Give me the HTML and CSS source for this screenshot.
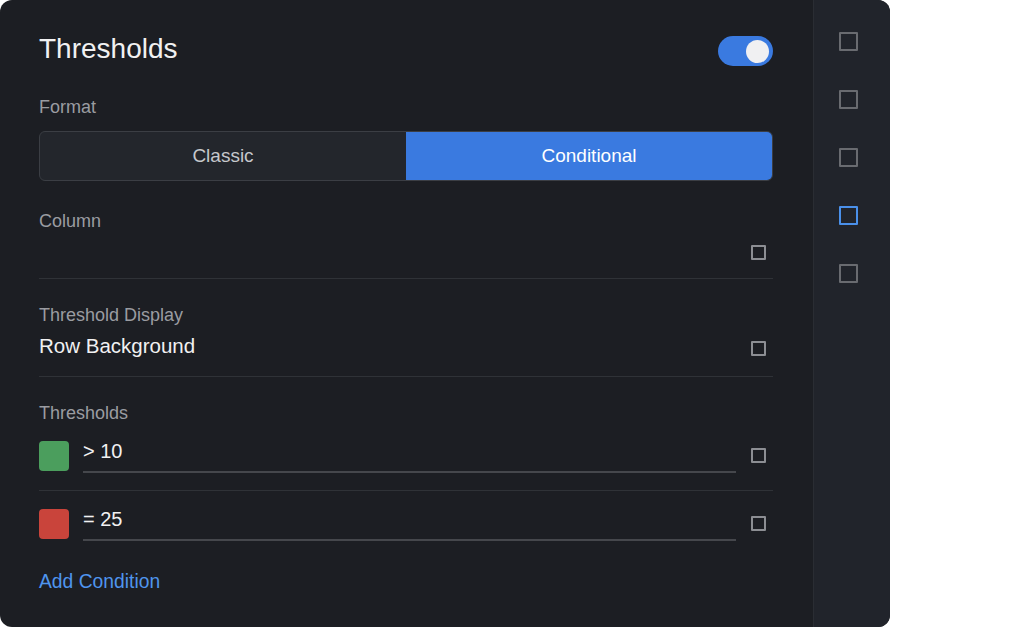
FILE: index.html
```html
<!DOCTYPE html>
<html lang="en">
<head>
  <meta charset="UTF-8">
  <meta name="viewport" content="width=device-width, initial-scale=1.0">
  <title>Thresholds</title>
  <link rel="stylesheet" href="styles.css">
</head>
<body>
  <div class="panel">
    <main class="editor">
      <header class="editor-header">
        <h1>Thresholds</h1>
        <span class="toggle is-on"><span class="toggle-knob"></span></span>
      </header>

      <section class="field field-format">
        <div class="field-label">Format</div>
        <div class="segmented">
          <button class="segment">Classic</button>
          <button class="segment is-active">Conditional</button>
        </div>
      </section>

      <section class="field field-first">
        <div class="field-label">Column</div>
        <div class="field-value field-value-empty">
          <span class="value-text"></span>
          <span class="check"></span>
        </div>
      </section>

      <section class="field">
        <div class="field-label">Threshold Display</div>
        <div class="field-value">
          <span class="value-text">Row Background</span>
          <span class="check"></span>
        </div>
      </section>

      <section class="field field-last">
        <div class="field-label">Thresholds</div>
        <ul class="threshold-list">
          <li class="threshold-row">
            <span class="swatch swatch-green"></span>
            <span class="threshold-input">&gt; 10</span>
            <span class="check"></span>
          </li>
          <li class="threshold-row">
            <span class="swatch swatch-red"></span>
            <span class="threshold-input">= 25</span>
            <span class="check"></span>
          </li>
        </ul>
        <a class="add-link" href="#">Add Condition</a>
      </section>
    </main>

    <aside class="rail">
      <span class="rail-icon"></span>
      <span class="rail-icon"></span>
      <span class="rail-icon"></span>
      <span class="rail-icon is-active"></span>
      <span class="rail-icon"></span>
    </aside>
  </div>
</body>
</html>
```

FILE: styles.css
```css
:root {
  --bg: #1c1e23;
  --rail-bg: #21242b;
  --line: #2f3237;
  --text: #f1f1f2;
  --muted: #9a9ca1;
  --primary: #3a7ae0;
  --link: #4f95ee;
}
* {
  box-sizing: border-box;
}
body {
  margin: 0;
  background: #fff;
  font-family: 'Liberation Sans', Arial, sans-serif;
}
.panel {
  display: flex;
  width: 890px;
  height: 627px;
  background: var(--bg);
  border-radius: 12px;
  overflow: hidden;
}
.editor {
  flex: 1;
  padding: 36px 40px 0 39px;
}
.editor-header {
  display: flex;
  align-items: flex-start;
  justify-content: space-between;
  height: 30px;
}
.editor-header h1 {
  margin: 0;
  font-size: 28px;
  font-weight: 400;
  line-height: 26px;
  color: var(--text);
}
.toggle {
  position: relative;
  width: 55px;
  height: 30px;
  border-radius: 15px;
  background: #4a4d53;
}
.toggle.is-on {
  background: var(--primary);
}
.toggle-knob {
  position: absolute;
  top: 4px;
  right: 4px;
  width: 23px;
  height: 23px;
  border-radius: 50%;
  background: #f0f0f2;
}
.field {
  padding: 26px 0 18px;
  border-bottom: 1px solid var(--line);
}
.field-format {
  padding: 0;
  margin-top: 31px;
  border: none;
}
.field-first {
  padding-top: 30px;
  padding-bottom: 17px;
}
.field-last {
  border: none;
}
.field-label {
  font-size: 18px;
  line-height: 20px;
  color: var(--muted);
}
.segmented {
  display: flex;
  height: 50px;
  margin-top: 14px;
  border: 1px solid #3b3e44;
  border-radius: 6px;
  overflow: hidden;
  background: #23262c;
}
.segment {
  flex: 1;
  border: none;
  background: transparent;
  font-family: inherit;
  font-size: 19px;
  color: #c6c8cc;
}
.segment.is-active {
  background: var(--primary);
  color: #fff;
}
.field-value {
  display: flex;
  align-items: center;
  height: 24px;
  margin-top: 9px;
}
.field-value-empty {
  height: 21px;
}
.value-text {
  flex: 1;
  font-size: 20.5px;
  line-height: 24px;
  color: var(--text);
}
.check {
  flex: none;
  width: 15px;
  height: 15px;
  margin: 4px 7px 0 15px;
  border: 2px solid #8c8e93;
  border-radius: 1px;
}
.threshold-list {
  list-style: none;
  margin: 18px 0 0;
  padding: 0;
}
.threshold-row {
  display: flex;
  align-items: flex-start;
  padding: 18px 0 17px;
  border-bottom: 1px solid var(--line);
}
.threshold-row:first-child {
  padding-top: 0;
}
.threshold-row:last-child {
  padding-bottom: 0;
  border: none;
}
.threshold-row .check {
  margin-top: 7px;
}
.swatch {
  flex: none;
  width: 30px;
  height: 30px;
  margin-right: 14px;
  border-radius: 4px;
}
.swatch-green {
  background: #4b9e5d;
}
.swatch-red {
  background: #c9443b;
}
.threshold-input {
  flex: 1;
  height: 32px;
  font-size: 20px;
  line-height: 20px;
  color: var(--text);
  border-bottom: 2px solid #45474c;
}
.add-link {
  display: inline-block;
  margin-top: 30px;
  font-size: 19.3px;
  line-height: 22px;
  color: var(--link);
  text-decoration: none;
}
.rail {
  display: flex;
  flex-direction: column;
  gap: 39px;
  width: 77px;
  padding: 32px 0 0 25px;
  background: var(--rail-bg);
  border-left: 1px solid #2a2d33;
}
.rail-icon {
  width: 19px;
  height: 19px;
  border: 2px solid #696b70;
  border-radius: 1px;
}
.rail-icon.is-active {
  border-color: #4a90ea;
}
```
